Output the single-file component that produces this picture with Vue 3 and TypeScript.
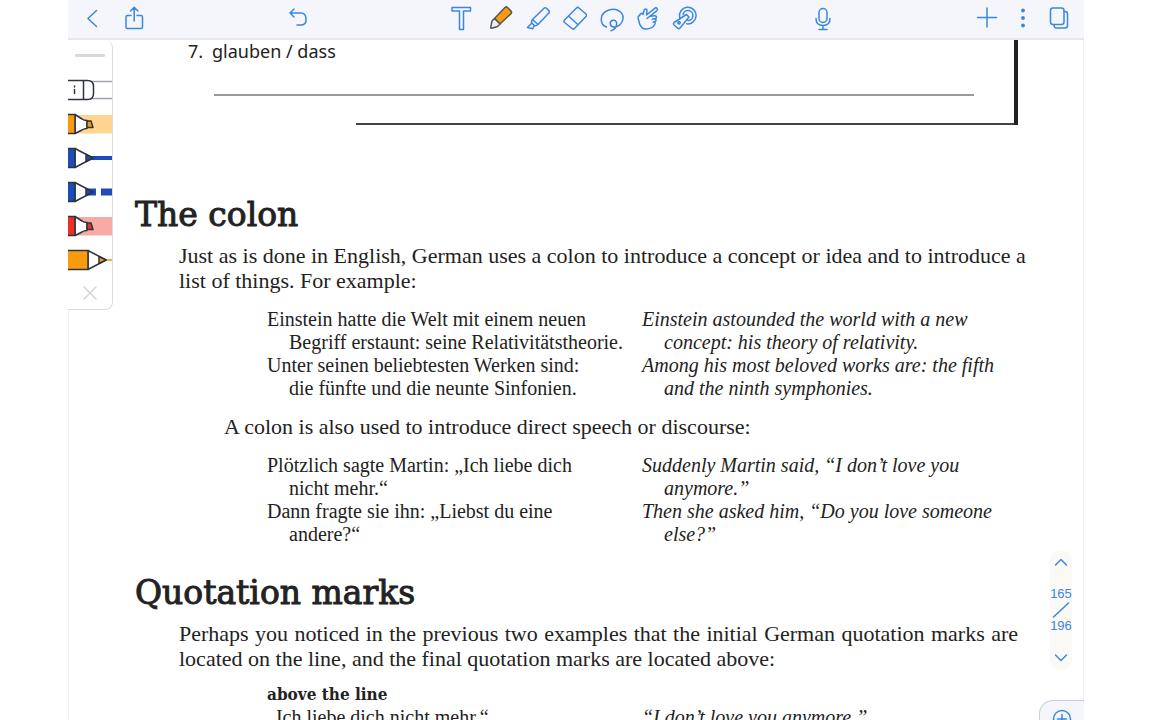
<script setup lang="ts">
interface Example {
  german: string[]
  english: string[]
}

const colonExamples: Example[] = [
  {
    german: ['Einstein hatte die Welt mit einem neuen', 'Begriff erstaunt: seine Relativitätstheorie.'],
    english: ['Einstein astounded the world with a new', 'concept: his theory of relativity.'],
  },
  {
    german: ['Unter seinen beliebtesten Werken sind:', 'die fünfte und die neunte Sinfonien.'],
    english: ['Among his most beloved works are: the fifth', 'and the ninth symphonies.'],
  },
]

const speechExamples: Example[] = [
  {
    german: ['Plötzlich sagte Martin: „Ich liebe dich', 'nicht mehr.“'],
    english: ['Suddenly Martin said, “I don’t love you', 'anymore.”'],
  },
  {
    german: ['Dann fragte sie ihn: „Liebst du eine', 'andere?“'],
    english: ['Then she asked him, “Do you love someone', 'else?”'],
  },
]

const quoteExamples: Example[] = [
  { german: ['„Ich liebe dich nicht mehr.“'], english: ['“I don’t love you anymore.”'] },
]
</script>

<template>
  <div class="app">
    <header class="toolbar">
      <div class="group start">
        <button class="tool" aria-label="Back">
          <svg width="24" height="24" viewBox="0 1 24 24"><path d="M16.500 4.500 8 12.500l8.500 8" /></svg>
        </button>
        <button class="tool" aria-label="Share">
          <svg width="24" height="26" viewBox="0 1 24 26">
            <path d="M9 10.500H5.500Q4 10.500 4 12v10q0 1.500 1.500 1.500h13.500q1.500 0 1.500-1.500V12q0-1.500-1.500-1.500H15M12.200 16V2.500M8.500 6l3.700-3.700L16 6" />
          </svg>
        </button>
      </div>
      <span class="space"></span>
      <button class="tool" aria-label="Undo">
        <svg width="24" height="24" viewBox="0 3 24 24"><path d="M8 5 4 9l4 4M4 9h10.500q5.500 0 5.500 6v1q0 5-5.500 5H11" /></svg>
      </button>
      <span class="space"></span>
      <div class="group tools">
        <button class="tool" aria-label="Text">
          <svg width="26" height="28" viewBox="0 1 26 28"><path d="M4 3.500h18.500v3.500h-7V25.500h-4V7H4z" /></svg>
        </button>
        <button class="tool" aria-label="Pen">
          <svg class="pen" width="28" height="28" viewBox="-3 2 28 28">
            <path class="ink" d="m6.500 15.500 10.500-11q1.200-1.200 2.500 0l3.500 3.500q1.200 1.300 0 2.600L12 21z" />
            <path class="tip" d="m6.500 15.500 5.500 5.500-2.500 2.500-6 1.700q-1 .2-.8-.9L4 18z" />
          </svg>
        </button>
        <button class="tool" aria-label="Highlighter">
          <svg width="28" height="28" viewBox="-3 1 28 28">
            <path d="m7.500 15.500 11.500-11.200q1.200-1.200 2.500 0l2.300 2.300q1.200 1.300 0 2.500L13 20.500zM7.500 15.500q-1.500 2-.7 3.500l2.500 2.500q1.800.6 3.700-1M6.800 19l-4.300 4.500 5.300 1.300 1.500-3.300" />
          </svg>
        </button>
        <button class="tool" aria-label="Eraser">
          <svg width="28" height="28" viewBox="-4 1 28 28">
            <path d="M1.500 16 13.500 4q1.200-1.200 2.500 0l7 6q1.200 1.300 0 2.600L11.500 24.500q-1.200 1.200-2.500 0l-7.500-6q-1.200-1.200 0-2.500zM5.500 12l9.500 8.700" />
          </svg>
        </button>
        <button class="tool" aria-label="Lasso">
          <svg width="28" height="28" viewBox="-2 0 28 28">
            <path d="M7.500 22C.5 19.500 .5 9.500 7.500 6c8-4 17.500 0 16.500 8-.6 4.500-4.500 8-9 8-4.500 0-5-6-1-6.800 3.500-.6 4.500 3.500 3 6.500-1 2-2.500 3.500-5 4" />
          </svg>
        </button>
        <button class="tool" aria-label="Hand">
          <svg width="28" height="28" viewBox="0 1 28 28">
            <path d="M13 14.500 22.700 6.800c1.800-1.600-.2-4-2-2.500L12.500 11 13 6.500c0-2-2.500-2-3 0L9 10.500C8 8.500 5.500 9.500 5.800 11.500c-1.800.3-2 2-1.500 3.500l1.200 4.500C6.500 23 8.500 25 12 25c4 0 7-1 9-5 .8-1.500-.5-2.500-1.500-2M16.500 12.200l4.300-.5c2-.2 2.400 2.500.5 2.900l-3 .6M20 14.800c2.500-.2 2.700 2.300 1 2.700l-2 .8" />
          </svg>
        </button>
        <button class="tool" aria-label="Laser pointer">
          <svg width="28" height="28" viewBox="1 1 28 28">
            <path d="M9.700 13.500a8.300 8.300 0 1 1 7 6.300M13 10.500a5 5 0 1 1 5 6M16.500 10.500l2.500 2.500-9 11q-1.200 1.200-2.500 0l-3.500-3q-1.200-1.300 0-2.500z" />
            <circle cx="9" cy="18.700" r="1.200" />
          </svg>
        </button>
      </div>
      <span class="space narrow"></span>
      <button class="tool" aria-label="Record audio">
        <svg width="24" height="26" viewBox="0 0 24 26">
          <rect x="8" y="2.500" width="8" height="14" rx="4" />
          <path d="M5 12.500q0 7 7 7t7-7M12 19.500v4M8 23.500h8" />
        </svg>
      </button>
      <span class="space"></span>
      <div class="group">
        <button class="tool" aria-label="Add">
          <svg width="24" height="24" viewBox="0 1 24 24"><path d="M2.500 11.500h19M12 2v19" /></svg>
        </button>
        <button class="tool" aria-label="More">
          <svg class="dots" width="24" height="24" viewBox="0 1 24 24">
            <circle cx="12" cy="4.500" r="1.900" /><circle cx="12" cy="12" r="1.900" /><circle cx="12" cy="19.500" r="1.900" />
          </svg>
        </button>
        <button class="tool" aria-label="Pages">
          <svg width="24" height="26" viewBox="0 1 24 26">
            <rect x="3.500" y="3" width="13.500" height="16.500" rx="2.500" />
            <path d="M17 6.500h1q2.500 0 2.500 2.500v11.500q0 2.500-2.500 2.500H9.500Q7 23 7 19.500" />
          </svg>
        </button>
      </div>
    </header>

    <main class="page">
      <article class="document">
        <section class="exercise">
          <p class="question"><span class="number">7.</span>glauben / dass</p>
          <div class="answer"></div>
          <div class="box-edge"></div>
        </section>

        <h1>The colon</h1>
        <p class="text">
          <span class="full">Just as is done in English, German uses a colon to introduce a concept or idea and to introduce a</span>
          <span>list of things. For example:</span>
        </p>
        <div class="examples">
          <template v-for="item in colonExamples" :key="item.german[0]">
            <p lang="de"><span v-for="part in item.german" :key="part">{{ part }}</span></p>
            <p class="english"><span v-for="part in item.english" :key="part">{{ part }}</span></p>
          </template>
        </div>
        <p class="text indented">A colon is also used to introduce direct speech or discourse:</p>
        <div class="examples">
          <template v-for="item in speechExamples" :key="item.german[0]">
            <p lang="de"><span v-for="part in item.german" :key="part">{{ part }}</span></p>
            <p class="english"><span v-for="part in item.english" :key="part">{{ part }}</span></p>
          </template>
        </div>

        <h1 class="next">Quotation marks</h1>
        <p class="text">
          <span class="full">Perhaps you noticed in the previous two examples that the initial German quotation marks are</span>
          <span>located on the line, and the final quotation marks are located above:</span>
        </p>
        <div class="examples last">
          <h2>above the line</h2>
          <template v-for="item in quoteExamples" :key="item.german[0]">
            <p lang="de"><span v-for="part in item.german" :key="part">{{ part }}</span></p>
            <p class="english"><span v-for="part in item.english" :key="part">{{ part }}</span></p>
          </template>
        </div>
      </article>

      <aside class="palette" aria-label="Pens">
        <span class="handle"></span>
        <button class="swatch" aria-label="Eraser tape">
          <svg width="45" height="34" viewBox="0 0 45 34">
            <path class="grey" d="M22 8.500h23M22 25.500h23" />
            <path class="line" fill="#fff" d="M0 7.500h19.500q6 0 6 6v7q0 6-6 6H0M15.500 7.500v19" />
            <path class="line" d="M6.500 13v1M6.500 16.500v4" />
          </svg>
        </button>
        <button class="swatch" aria-label="Orange highlighter">
          <svg width="45" height="34" viewBox="0 0 45 34">
            <path fill="#ffd591" d="M8 8h37v18.500H8z" />
            <path class="line" fill="#fff" d="M7 7.500 14 12q2 1.500 5 1.500v8q-3 0-5 1.500l-7 3.500z" />
            <path class="line" fill="#f99b0c" d="M-1 7.500h8v19h-8zM19 14h4l2 6.500h-6z" />
          </svg>
        </button>
        <button class="swatch" aria-label="Blue pen">
          <svg width="45" height="34" viewBox="0 0 45 34">
            <path fill="#1d4cb9" d="M23 15h22v4H23z" />
            <path class="line" fill="#fff" d="M7 7.500 25 17 7 26.500z" />
            <path class="line" fill="#1d4cb9" d="M-1 7.500h8v19h-8zM18 13.500l7 3.500-7 3.500z" />
          </svg>
        </button>
        <button class="swatch" aria-label="Dashed blue pen">
          <svg width="45" height="34" viewBox="0 0 45 34">
            <path fill="#1d4cb9" d="M20 13.500h8v7h-8zM33 13.500h12v7H33z" />
            <path class="line" fill="#fff" d="M7 7.500 25 17 7 26.500z" />
            <path class="line" fill="#1d4cb9" d="M-1 7.500h8v19h-8zM18 13.500l7 3.500-7 3.500z" />
          </svg>
        </button>
        <button class="swatch" aria-label="Red highlighter">
          <svg width="45" height="34" viewBox="0 0 45 34">
            <path fill="#f8aaa5" d="M8 8h37v18.500H8z" />
            <path class="line" fill="#fff" d="M7 7.500 14 12q2 1.500 5 1.500v8q-3 0-5 1.500l-7 3.500z" />
            <path class="line" fill="#ed3024" d="M-1 7.500h8v19h-8zM19 14h4l2 6.500h-6z" />
          </svg>
        </button>
        <button class="swatch" aria-label="Orange pencil">
          <svg width="45" height="34" viewBox="0 0 45 34">
            <path fill="#f5ac4a" d="M36 16h9v2h-9z" />
            <path class="line" fill="#fff" d="M20 7.500 38 17 20 26.500z" />
            <path class="line" fill="#f99b0c" d="M-1 7.500h21v19H-1zM31 13.500l7 3.500-7 3.500z" />
          </svg>
        </button>
        <button class="swatch close" aria-label="Close palette">
          <svg width="45" height="34" viewBox="0 0 45 34"><path class="cross" d="m16 11 12 12M28 11 16 23" /></svg>
        </button>
      </aside>

      <nav class="pager" aria-label="Page navigation">
        <button aria-label="Previous page">
          <svg width="22" height="22" viewBox="0 0 22 22"><path d="m5.500 13 5.500-5.500 5.500 5.500" /></svg>
        </button>
        <div class="count">
          <span>165</span>
          <svg width="22" height="16" viewBox="0 0 22 16"><path d="M3.500 15 18.500 1" /></svg>
          <span>196</span>
        </div>
        <button aria-label="Next page">
          <svg width="22" height="22" viewBox="0 0 22 22"><path d="m5.500 9 5.500 5.500L16.500 9" /></svg>
        </button>
      </nav>
      <button class="zoom" aria-label="Zoom in">
        <svg width="22" height="22" viewBox="0 0 22 22"><circle cx="11" cy="11" r="8.500" /><path d="M6.500 11h9M11 6.500v9" /></svg>
      </button>
    </main>
  </div>
</template>

<style>
body {
  margin: 0;
  background: #fff;
}
</style>

<style scoped>
.app {
  display: flex;
  flex-direction: column;
  height: 100vh;
  margin: 0 68px;
  overflow: hidden;
  color: #222;
  font-family: "Liberation Serif", serif;
}

button {
  display: flex;
  align-items: center;
  justify-content: center;
  padding: 0;
  border: 0;
  background: none;
}

svg {
  display: block;
  flex: none;
  fill: none;
  stroke: #3a87dd;
  stroke-width: 1.5;
  stroke-linecap: round;
  stroke-linejoin: round;
}

.toolbar {
  display: flex;
  flex: none;
  align-items: center;
  height: 38px;
  padding: 0 7px 0 6px;
  border-bottom: 2px solid #e8e9ed;
  background: #f4f6fb;
}

.group {
  display: flex;
}

.start {
  gap: 6px;
}

.tools {
  width: 260px;
  justify-content: space-between;
}

.space {
  flex: 5;
}

.space.narrow {
  flex: 4;
}

.tool {
  width: 36px;
  height: 36px;
}

.pen {
  stroke: #555;
}

.ink {
  fill: #f99b0c;
}

.tip {
  fill: #eceef2;
}

.dots {
  fill: #3a87dd;
  stroke: none;
}

.page {
  position: relative;
  flex: 1;
  min-height: 0;
  overflow: hidden;
}

.palette {
  position: absolute;
  top: 0;
  left: 0;
  width: 44px;
  border: 1px solid #d9dbe3;
  border-width: 0 1px 1px 0;
  border-radius: 0 8px 8px 0;
  background: #fff;
  overflow: hidden;
}

.handle {
  display: block;
  width: 30px;
  height: 3px;
  margin: 14px auto 16px;
  border-radius: 2px;
  background: #d5d9db;
}

.swatch {
  justify-content: flex-start;
  width: 100%;
  height: 34px;
}

.swatch.close {
  height: 32px;
}

.swatch svg {
  stroke: none;
}

.swatch .line {
  stroke: #2d3440;
}

.swatch .grey {
  stroke: #a0a3ad;
}

.swatch .cross {
  stroke: #d3d5da;
}

.document {
  padding: 0 65px 0 66px;
  border: solid #f0f0f3;
  border-width: 0 1px;
}

p,
h1,
h2 {
  margin: 0;
}

.exercise {
  box-sizing: border-box;
  height: 85px;
  margin-left: 53px;
  border-right: 4px solid #222;
  font: 18px/22px "Noto Sans", sans-serif;
}

.question {
  display: flex;
}

.number {
  width: 24px;
}

.answer {
  height: 32px;
  margin: 0 40px 0 26px;
  border-bottom: 2px solid #9a9a9a;
}

.box-edge {
  height: 27px;
  margin-left: 168px;
  border-bottom: 2px solid #444;
}

h1 {
  margin-top: 66px;
  font: 33px/48px "DejaVu Serif", serif;
  -webkit-text-stroke: 1px #222;
}

h1.next {
  margin-top: 23px;
}

.text {
  margin: 4px 0 0 44px;
  font-size: 22px;
  line-height: 25px;
}

.text span,
.examples span {
  display: block;
  white-space: nowrap;
}

.full {
  text-align-last: justify;
}

.text.indented {
  margin: 14px 0 0 89px;
}

.examples {
  display: grid;
  grid-template-columns: 375px 1fr;
  margin: 15px 0 0 132px;
  font-size: 20px;
  line-height: 23px;
}

.examples span + span {
  padding-left: 22px;
}

.examples.last {
  margin-top: 12px;
}

.english {
  font-style: italic;
}

h2 {
  grid-column: 1 / -1;
  font: bold 17px/23px "DejaVu Serif Condensed", "DejaVu Serif", serif;
}

.pager {
  position: absolute;
  top: 510px;
  right: 12px;
  display: flex;
  flex-direction: column;
  align-items: center;
  width: 22px;
  padding: 2px 0;
  border-radius: 11px;
  background: #faf9f5;
}

.count {
  display: flex;
  flex-direction: column;
  align-items: center;
  padding: 12px 0;
  color: #3a87dd;
  font: 13px/16px "Liberation Sans", sans-serif;
}

.zoom {
  position: absolute;
  right: 0;
  bottom: -18px;
  width: 45px;
  height: 38px;
  border: 1px solid #c9ced8;
  border-right: 0;
  border-radius: 14px 0 0 14px;
  background: #f4f6fb;
}
</style>
